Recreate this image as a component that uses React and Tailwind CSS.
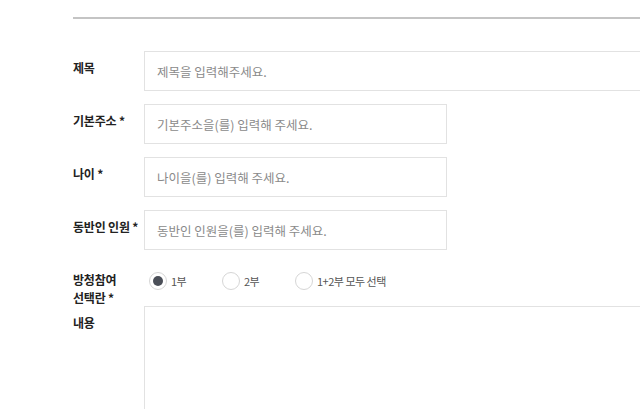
import React from "react";

const font = { fontFamily: '"Noto Sans CJK KR", "Noto Sans", sans-serif' };

function Label({ children }) {
  return (
    <div className="w-[71px] shrink-0 pt-[8px] text-[12px] leading-[18px] font-bold tracking-[-0.2px] text-[#222]">
      {children}
    </div>
  );
}

function Field({ label, placeholder, wide }) {
  return (
    <div className="flex items-start">
      <Label>{label}</Label>
      <input
        placeholder={placeholder}
        className={`h-[40px] ${wide ? "w-[560px]" : "w-[303px]"} shrink-0 border border-[#e2e2e2] bg-white px-[12px] text-[12.5px] tracking-[0px] text-[#333] placeholder:text-[#8a8a8a] outline-none`}
      />
    </div>
  );
}

function Radio({ checked, label }) {
  return (
    <label className="flex items-center gap-[4px]">
      <span className="flex h-[18px] w-[18px] items-center justify-center rounded-full border border-[#d6d6d6] bg-white">
        {checked && <span className="h-[10px] w-[10px] rounded-full bg-[#4b4f58]" />}
      </span>
      <span className="text-[11px] tracking-[-0.5px] text-[#555]">{label}</span>
    </label>
  );
}

export default function App() {
  return (
    <div className="h-[409px] w-[640px] overflow-hidden bg-white" style={font}>
      <div className="pl-[73px] pt-[17px]">
        <div className="h-[2px] w-[600px] bg-[#c4c4c4]" />
        <div className="mt-[32px] flex flex-col gap-[13px]">
          <Field label="제목" placeholder="제목을 입력해주세요." wide />
          <Field label="기본주소 *" placeholder="기본주소을(를) 입력해 주세요." />
          <Field label="나이 *" placeholder="나이을(를) 입력해 주세요." />
          <Field label="동반인 인원 *" placeholder="동반인 인원을(를) 입력해 주세요." />
        </div>
        <div className="mt-[13px] flex h-[43px] items-start">
          <Label>
            방청참여
            <br />
            선택란 *
          </Label>
          <div className="flex items-center pl-[5px] pt-[9px]">
            <div className="w-[73px]"><Radio checked label="1부" /></div>
            <div className="w-[73px]"><Radio label="2부" /></div>
            <div><Radio label="1+2부 모두 선택" /></div>
          </div>
        </div>
        <div className="flex items-start">
          <Label>내용</Label>
          <textarea className="h-[140px] w-[560px] shrink-0 resize-none border border-[#e2e2e2] bg-white outline-none" />
        </div>
      </div>
    </div>
  );
}
